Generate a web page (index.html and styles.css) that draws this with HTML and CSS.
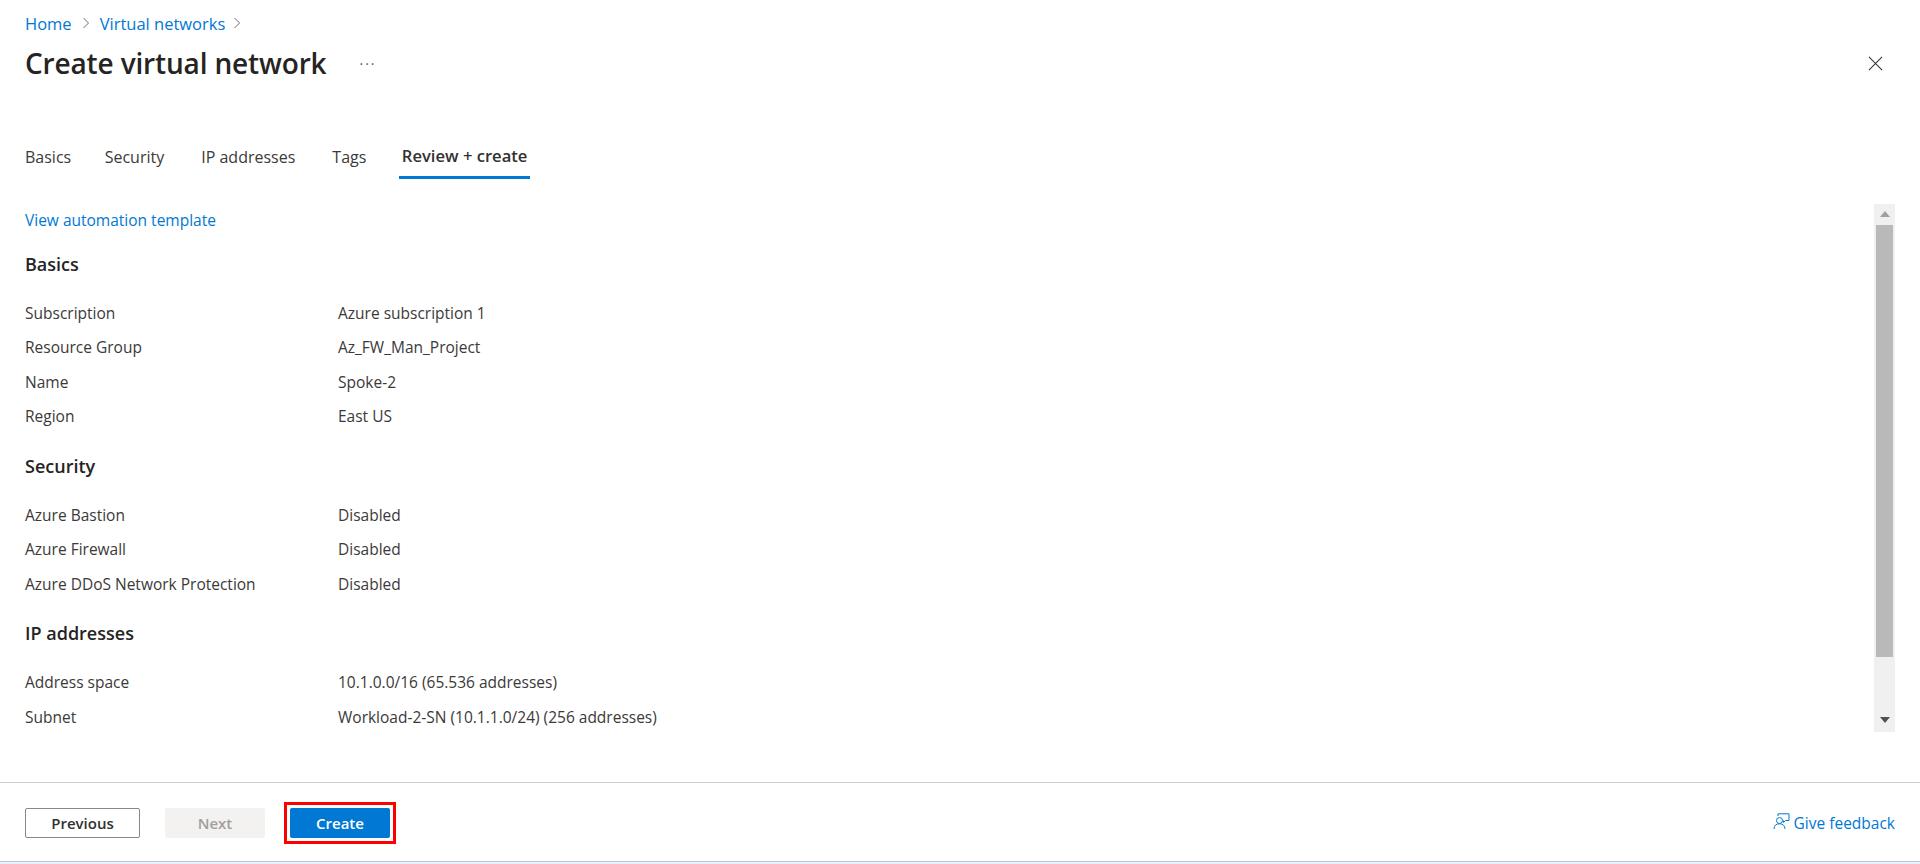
FILE: index.html
```html
<!DOCTYPE html>
<html lang="en">
<head>
<meta charset="utf-8">
<title>Create virtual network</title>
<link rel="stylesheet" href="styles.css">
</head>
<body>
<div class="page">
  <nav class="crumbs">
    <a class="link">Home</a>
    <svg class="chev" viewBox="0 0 8 12"><path d="M1.5 1l5 5-5 5" /></svg>
    <a class="link">Virtual networks</a>
    <svg class="chev" viewBox="0 0 8 12"><path d="M1.5 1l5 5-5 5" /></svg>
  </nav>
  <header class="head">
    <h1 class="title">Create virtual network</h1>
    <span class="more">···</span>
    <svg class="close" viewBox="0 0 16 16"><path d="M1 1l14 14M15 1L1 15" /></svg>
  </header>
  <div class="tabs">
    <span class="tab">Basics</span>
    <span class="tab">Security</span>
    <span class="tab">IP addresses</span>
    <span class="tab">Tags</span>
    <span class="tab active">Review + create</span>
  </div>
  <main class="pane">
    <div class="content">
      <a class="link auto">View automation template</a>
      <h2 class="section first">Basics</h2>
      <dl class="rows">
        <div class="row"><dt>Subscription</dt><dd>Azure subscription 1</dd></div>
        <div class="row"><dt>Resource Group</dt><dd>Az_FW_Man_Project</dd></div>
        <div class="row"><dt>Name</dt><dd>Spoke-2</dd></div>
        <div class="row"><dt>Region</dt><dd>East US</dd></div>
      </dl>
      <h2 class="section">Security</h2>
      <dl class="rows">
        <div class="row"><dt>Azure Bastion</dt><dd>Disabled</dd></div>
        <div class="row"><dt>Azure Firewall</dt><dd>Disabled</dd></div>
        <div class="row"><dt>Azure DDoS Network Protection</dt><dd>Disabled</dd></div>
      </dl>
      <h2 class="section">IP addresses</h2>
      <dl class="rows">
        <div class="row"><dt>Address space</dt><dd>10.1.0.0/16 (65.536 addresses)</dd></div>
        <div class="row"><dt>Subnet</dt><dd>Workload-2-SN (10.1.1.0/24) (256 addresses)</dd></div>
      </dl>
    </div>
    <div class="scrollbar">
      <span class="arrow up"></span>
      <span class="thumb"></span>
      <span class="arrow down"></span>
    </div>
  </main>
  <footer class="foot">
    <button class="btn prev">Previous</button>
    <button class="btn next">Next</button>
    <span class="mark"><button class="btn create">Create</button></span>
    <a class="link feedback">
      <svg class="fb" viewBox="0 0 17 17"><circle cx="6.500" cy="7.500" r="3"/><path d="M1 16c0-3.500 2.300-5.200 5.500-5.200s5.500 1.700 5.500 5.200"/><path d="M5 3V.8h11v6.700h-3.500L10.500 9.500V7.500"/></svg>
      Give feedback
    </a>
  </footer>
  <div class="edge"></div>
</div>
</body>
</html>
```
FILE: styles.css
```css
* { box-sizing: border-box; }
html, body { margin: 0; height: 100%; }
body {
  background: #fff;
  color: #3b3a39;
  font-family: "Open Sans", "Noto Sans", "Liberation Sans", sans-serif;
  font-size: 15.5px;
  overflow: hidden;
}
.page { display: flex; flex-direction: column; height: 864px; }
.link { color: #0078d4; }

.crumbs { display: flex; align-items: center; height: 20px; margin: 13px 0 0 25px; font-size: 16.5px; }
.chev { width: 8px; height: 12px; margin: 0 10px; fill: none; stroke: #707070; stroke-width: 1; }
.chev:last-child { margin: 0 0 0 8px; }

.head { display: flex; align-items: center; height: 40px; margin-top: 10px; padding: 0 37px 0 25px; }
.title { margin: 0; font-size: 28px; font-weight: 600; letter-spacing: -0.15px; color: #252423; }
.more { margin-left: 33px; font-size: 14px; letter-spacing: 2px; color: #605e5c; }
.close { width: 15px; height: 15px; margin-left: auto; fill: none; stroke: #323130; stroke-width: 1.1; }

.tabs { display: flex; gap: 37px; height: 38px; margin: 58px 0 0 25px; font-size: 16px; }
.tab { height: 38px; line-height: 32px; }
.tab:first-child { margin-right: -3.5px; }
.tab.active { margin-left: -4px; padding: 0 2.5px; border-bottom: 3px solid #0078d4; font-size: 16.6px; font-weight: 600; line-height: 30px; color: #323130; }

.pane { display: flex; flex: 1; min-height: 0; margin-top: 25px; padding: 0 25px 50px; }
.content { flex: 1; min-width: 0; padding-top: 6px; }
.auto { display: block; height: 20px; line-height: 20px; }
.section { margin: 14.2px 0 0; height: 22px; font-size: 18px; line-height: 22px; font-weight: 600; color: #252423; }
.section.first { margin-top: 23px; }
.rows { margin: 28px 0 0; }
.row { display: flex; height: 34.4px; line-height: 20px; }
dt { width: 313px; margin: 0; }
dd { margin: 0; }

.scrollbar { display: flex; flex-direction: column; align-items: center; width: 21px; background: #f0f0f0; padding: 0 2px; }
.thumb { flex: 1; align-self: stretch; background: #b9b9b9; margin: 1px 0 60px; }
.arrow { width: 0; height: 0; border-left: 5px solid transparent; border-right: 5px solid transparent; }
.arrow.up { margin-top: 7px; border-bottom: 6px solid #a0a0a0; margin-bottom: 7px; }
.arrow.down { margin-bottom: 9px; border-top: 6px solid #505050; }

.foot { display: flex; align-items: center; height: 79px; padding: 2px 25px 0; border-top: 1px solid #cfcfcf; }
.btn { height: 30px; padding: 0; border-radius: 2px; font: 600 15px "Open Sans", "Noto Sans", sans-serif; }
.prev { width: 115px; background: #fff; border: 1px solid #8a8886; color: #323130; }
.next { width: 100px; margin-left: 25px; background: #f3f2f1; border: 0; color: #a19f9d; }
.mark { display: flex; margin-left: 19px; padding: 3px; border: 3px solid #f00; }
.create { width: 100px; background: #0078d4; border: 0; color: #fff; }
.feedback { display: flex; align-items: center; gap: 4px; margin-left: auto; }
.fb { width: 17px; height: 17px; margin-top: -3px; fill: none; stroke: #0078d4; stroke-width: 1; }

.edge { flex: none; height: 3px; background: #e9f0fa; border-top: 1px solid #b9c7de; }
```
